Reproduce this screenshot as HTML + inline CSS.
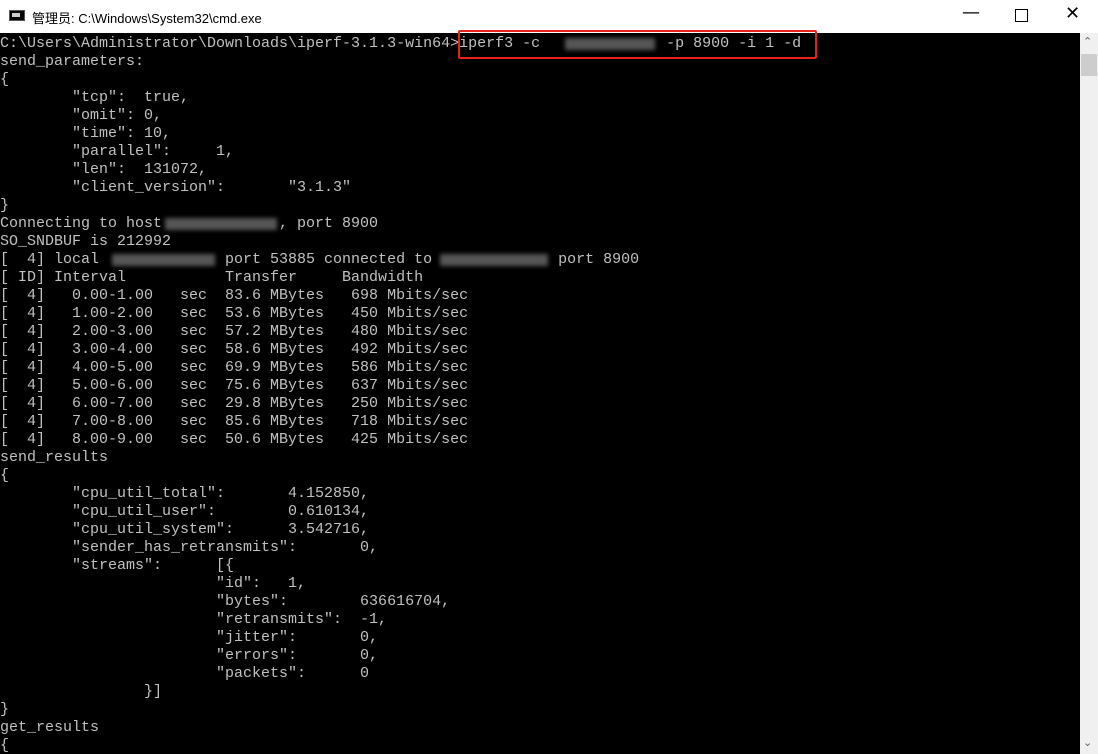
<!DOCTYPE html>
<html><head><meta charset="utf-8"><style>
html,body{margin:0;padding:0;width:1098px;height:754px;overflow:hidden;background:#000;}
#title{position:absolute;left:0;top:0;width:1098px;height:33px;background:#fff;font-family:"Liberation Sans","Noto Sans CJK SC",sans-serif;font-size:13px;color:#000;}
#title .t{position:absolute;left:32px;top:8px;}
#icon{position:absolute;left:9px;top:10px;width:16px;height:11px;background:#000;border:1px solid #555;box-sizing:border-box;}
#icon span{position:absolute;left:2px;top:2px;width:8px;height:4px;background:#ccc;}
.btn{position:absolute;top:4px;font-size:18px;color:#000;font-family:"DejaVu Sans",sans-serif;}
#con{position:absolute;left:0;top:35px;width:1080px;height:719px;overflow:hidden;}
pre{margin:0;font-family:"Liberation Mono",monospace;font-size:15px;line-height:18px;color:#c0c0c0;letter-spacing:0;}
.blur{position:absolute;background:#555;filter:blur(2px);height:12px;}
#red{position:absolute;left:458px;top:30px;width:355px;height:25px;border:2px solid #e8211b;border-radius:2px;}
#sb{position:absolute;left:1080px;top:33px;width:18px;height:721px;background:#f0f0f0;}
#thumb{position:absolute;left:1px;top:21px;width:16px;height:22px;background:#cdcdcd;}
.ar{position:absolute;left:3px;font-size:11px;color:#606060;font-family:"DejaVu Sans",sans-serif;}
</style></head><body>
<div id="title"><div id="icon"><span></span></div><div class="t">管理员: C:\Windows\System32\cmd.exe</div>
<div class="btn" style="left:962px;top:2px">&#8212;</div>
<div style="position:absolute;left:1015px;top:9px;width:11px;height:11px;border:1px solid #000;"></div>
<div class="btn" style="left:1065px;top:3px">&#10005;</div>
</div>
<div id="con"><pre>C:\Users\Administrator\Downloads\iperf-3.1.3-win64&gt;iperf3 -c              -p 8900 -i 1 -d
send_parameters:
{
        "tcp":  true,
        "omit": 0,
        "time": 10,
        "parallel":     1,
        "len":  131072,
        "client_version":       "3.1.3"
}
Connecting to host             , port 8900
SO_SNDBUF is 212992
[  4] local              port 53885 connected to              port 8900
[ ID] Interval           Transfer     Bandwidth
[  4]   0.00-1.00   sec  83.6 MBytes   698 Mbits/sec
[  4]   1.00-2.00   sec  53.6 MBytes   450 Mbits/sec
[  4]   2.00-3.00   sec  57.2 MBytes   480 Mbits/sec
[  4]   3.00-4.00   sec  58.6 MBytes   492 Mbits/sec
[  4]   4.00-5.00   sec  69.9 MBytes   586 Mbits/sec
[  4]   5.00-6.00   sec  75.6 MBytes   637 Mbits/sec
[  4]   6.00-7.00   sec  29.8 MBytes   250 Mbits/sec
[  4]   7.00-8.00   sec  85.6 MBytes   718 Mbits/sec
[  4]   8.00-9.00   sec  50.6 MBytes   425 Mbits/sec
send_results
{
        "cpu_util_total":       4.152850,
        "cpu_util_user":        0.610134,
        "cpu_util_system":      3.542716,
        "sender_has_retransmits":       0,
        "streams":      [{
                        "id":   1,
                        "bytes":        636616704,
                        "retransmits":  -1,
                        "jitter":       0,
                        "errors":       0,
                        "packets":      0
                }]
}
get_results
{</pre>
<div class="blur" style="left:565px;top:3px;width:90px;"></div>
<div class="blur" style="left:165px;top:183px;width:112px;"></div>
<div class="blur" style="left:112px;top:219px;width:103px;"></div>
<div class="blur" style="left:440px;top:219px;width:108px;"></div>
</div>
<div id="red"></div>
<div id="sb"><div class="ar" style="top:2px">&#8963;</div><div id="thumb"></div><div class="ar" style="top:703px">&#8964;</div></div>
</body></html>
